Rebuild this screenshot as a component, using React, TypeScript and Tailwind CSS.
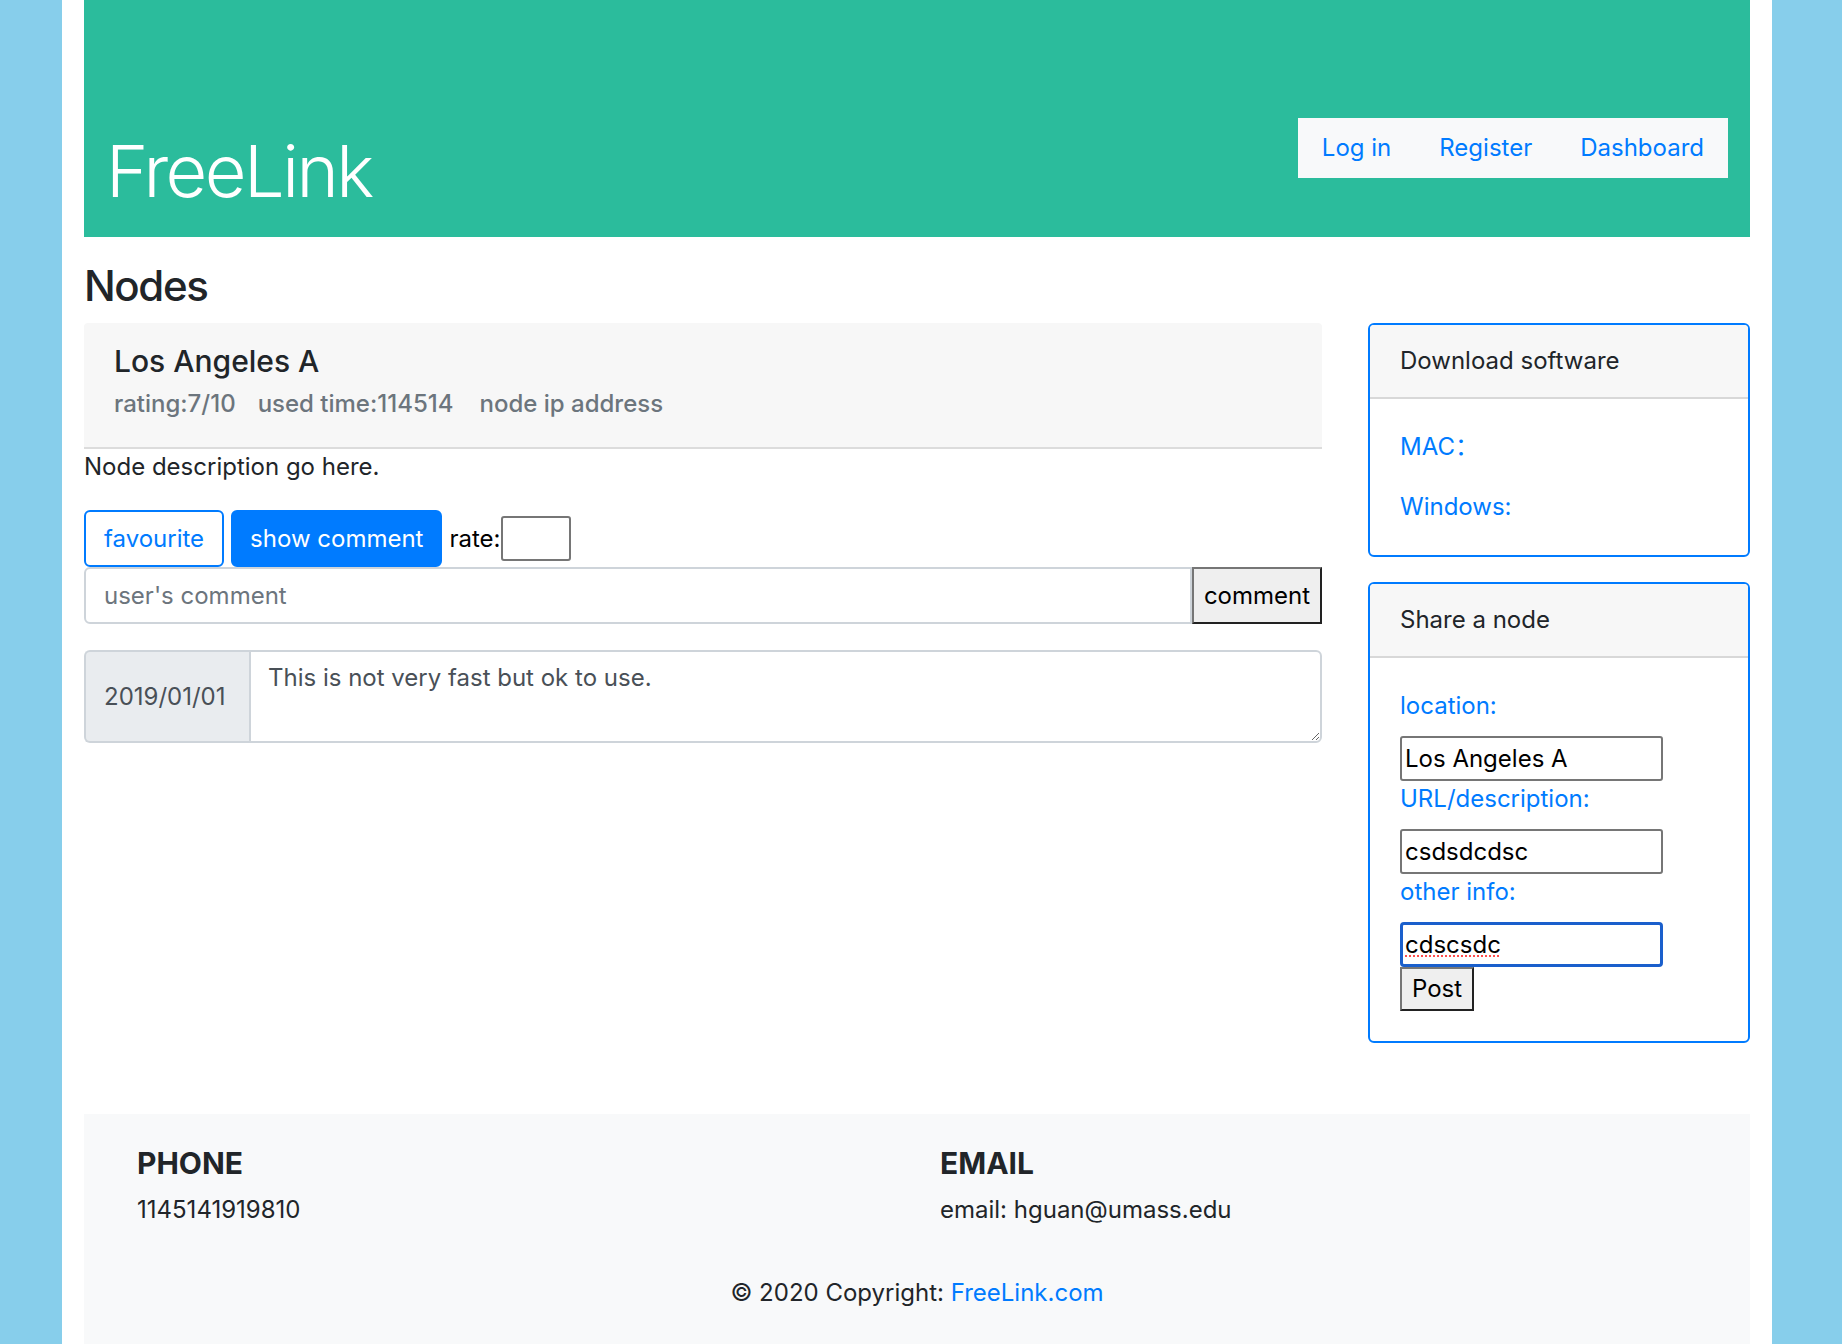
import React from "react";

export default function App() {
  return (
    <div className="min-h-screen bg-[#87ceeb] font-['Inter','Noto_Sans_CJK_SC',sans-serif] text-[24px] leading-[36px] text-[#212529]">
      <div className="ml-[62px] w-[1710px] bg-white px-[22px] pb-0 flex flex-col">
        {/* Header */}
        <header className="h-[237px] bg-[#2bbc9c] px-[22px] pb-[23px] flex items-end justify-between">
          <h1 className="text-[72px] leading-[86px] font-light tracking-[-2.5px] text-white">FreeLink</h1>
          <nav className="mb-[36px] bg-[#f8f9fa] flex">
            <a className="px-[24px] py-[12px] text-[#007bff]">Log in</a>
            <a className="px-[24px] py-[12px] text-[#007bff]">Register</a>
            <a className="px-[24px] py-[12px] text-[#007bff]">Dashboard</a>
          </nav>
        </header>

        <h3 className="mt-[24px] mb-[12px] text-[42px] leading-[50px] font-medium tracking-[-1.4px]">Nodes</h3>

        <div className="flex gap-[46px]">
          {/* Left column */}
          <div className="w-[1238px] flex flex-col">
            <div className="bg-[#f7f7f7] rounded-t-[4px] border-b-2 border-[#dcdcdc] px-[30px] pt-[20px] pb-[25px]">
              <div className="text-[30px] leading-[36px] font-medium">Los Angeles A</div>
              <div className="mt-[7px] text-[#6c757d] font-medium flex">
                <span className="mr-[22px]">rating:7/10</span>
                <span className="mr-[26px]">used time:114514</span>
                <span>node ip address</span>
              </div>
            </div>
            <p className="mb-[25px]">Node description go here.</p>
            <div className="flex items-center">
              <button className="h-[57px] px-[18px] border-2 border-[#007bff] rounded-[6px] text-[#007bff] bg-white">
                favourite
              </button>
              <button className="ml-[7px] h-[57px] px-[17px] border-2 border-[#007bff] rounded-[6px] text-white bg-[#007bff]">
                show comment
              </button>
              <span className="ml-[7px] text-black">rate:</span>
              <input className="ml-[0px] w-[70px] h-[45px] border-2 border-[#767676] rounded-[3px] px-[3px]" />
            </div>
            <div className="flex h-[57px]">
              <input
                placeholder="user's comment"
                className="flex-1 min-w-0 border-2 border-[#ced4da] rounded-l-[6px] px-[18px] text-[#495057] placeholder:text-[#6c757d] outline-none"
              />
              <button className="w-[130px] bg-[#efefef] border-2 border-t-[#767676] border-l-[#767676] border-b-[#222] border-r-[#222] text-black">
                comment
              </button>
            </div>
            <div className="mt-[26px] flex h-[93px]">
              <div className="w-[165px] bg-[#e9ecef] border-2 border-r-0 border-[#ced4da] rounded-l-[6px] px-[18px] flex items-center text-[#495057]">
                2019/01/01
              </div>
              <textarea
                rows={2}
                defaultValue="This is not very fast but ok to use."
                className="flex-1 border-2 border-[#ced4da] rounded-r-[6px] px-[17px] py-[8px] text-[#495057] leading-[36px] outline-none"
              />
            </div>
          </div>

          {/* Right column */}
          <div className="w-[382px] flex flex-col">
            <div className="border-2 border-[#007bff] rounded-[6px] overflow-hidden">
              <div className="bg-[#f7f7f7] border-b-2 border-[#d8d8d8] px-[30px] py-[18px]">Download software</div>
              <div className="p-[30px] text-[#007bff]">
                <p className="mb-[24px]">MAC：</p>
                <p>Windows:</p>
              </div>
            </div>

            <div className="mt-[25px] border-2 border-[#007bff] rounded-[6px] overflow-hidden">
              <div className="bg-[#f7f7f7] border-b-2 border-[#d8d8d8] px-[30px] py-[18px]">Share a node</div>
              <div className="p-[30px] flex flex-col items-start">
                <label className="text-[#007bff] mb-[12px]">location:</label>
                <input
                  defaultValue="Los Angeles A"
                  className="w-[263px] h-[45px] border-2 border-[#767676] rounded-[3px] px-[3px] text-black"
                />
                <label className="text-[#007bff] mb-[12px]">URL/description:</label>
                <input
                  defaultValue="csdsdcdsc"
                  className="w-[263px] h-[45px] border-2 border-[#767676] rounded-[3px] px-[3px] text-black"
                />
                <label className="text-[#007bff] mb-[12px]">other info:</label>
                <div className="w-[263px] h-[45px] border-[3px] border-[#1a5fcc] rounded-[4px] px-[2px] text-black flex items-center">
                  <span className="underline decoration-dotted decoration-[#ff4d4d] decoration-2 underline-offset-[3px]">cdscsdc</span>
                </div>
                <button className="h-[44px] px-[10px] bg-[#efefef] border-2 border-t-[#767676] border-l-[#767676] border-b-[#222] border-r-[#222] text-black">
                  Post
                </button>
              </div>
            </div>
          </div>
        </div>

        {/* Footer */}
        <footer className="mt-[71px] bg-[#f8f9fa] px-[53px] pt-[31px] pb-[36px]">
          <div className="grid grid-cols-2 gap-x-[46px]">
            <div>
              <h5 className="text-[30px] leading-[36px] font-bold uppercase mb-[11px]">Phone</h5>
              <p>1145141919810</p>
            </div>
            <div>
              <h5 className="text-[30px] leading-[36px] font-bold uppercase mb-[11px]">Email</h5>
              <p>email: hguan@umass.edu</p>
            </div>
          </div>
          <div className="mt-[47px] text-center">
            © 2020 Copyright: <a className="text-[#007bff]">FreeLink.com</a>
          </div>
        </footer>
      </div>
    </div>
  );
}
